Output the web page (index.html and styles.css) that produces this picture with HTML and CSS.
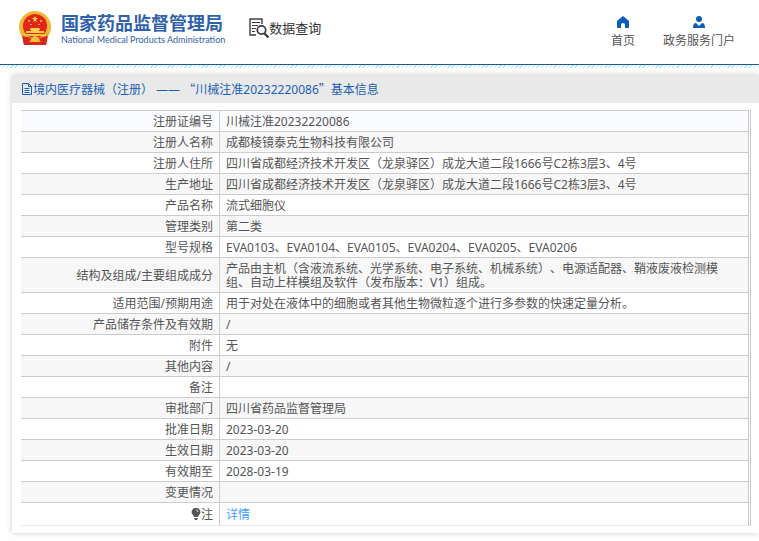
FILE: index.html
```html
<!DOCTYPE html>
<html lang="zh-CN">
<head>
    <meta charset="UTF-8">
    <meta name="viewport" content="width=device-width, initial-scale=1.0">
    <title>国家药品监督管理局 数据查询</title>
    <link rel="stylesheet" href="styles.css">
</head>
<body>
    <header class="header">
        <a href="#" class="logo">
            <svg class="emblem" viewBox="0 0 32 34" aria-hidden="true">
                <path d="M4 25h24l-1 9h-6l-5-2-5 2H5z" fill="#d8261c"/>
                <circle cx="16" cy="16" r="16" fill="#f2b632"/>
                <path d="M3 23q13 8 26 0l-2 6-6 2-5-2-5 2-6-2z" fill="#f0a92c"/>
                <circle cx="16" cy="15" r="12" fill="#e1251b"/>
                <path d="M16 5l1 2h2l-2 2 1 2-2-1-2 1 1-2-2-2h2z" fill="#fbd04a"/>
                <path d="M9 9h2v2H9zM21 9h2v2h-2zM11 13h2v1h-2zM19 13h2v1h-2z" fill="#f5a52f"/>
                <path d="M11 18l1-1h8l1 1v1h-1v1h5v2H7v-2h5v-1h-1z" fill="#fbd04a"/>
                <path d="M5 23h22v2H5z" fill="#f6c23c"/>
                <path d="M3 25l9 2-3 7H5zM29 25l-9 2 3 7h4z" fill="#d8261c"/>
                <circle cx="16" cy="28" r="3" fill="#f8c33b"/>
                <path d="M12 31h8l2 3H10z" fill="#e1251b"/>
            </svg>
            <span class="logo-text">
                <strong>国家药品监督管理局</strong>
                <span>National Medical Products Administration</span>
            </span>
        </a>
        <a href="#" class="search-title">
            <svg viewBox="0 0 20 20" fill="none" stroke="#3a3d44" aria-hidden="true">
                <path d="M13 6V1H1v16h6" stroke-width="1.4"/>
                <path d="M3 4.5h8M3 7.5h6M3 10.500h4M3 13.500h3" stroke-width="1.2"/>
                <circle cx="12.500" cy="12" r="4.200" stroke-width="1.8"/>
                <path d="M15.500 15.500l4 4" stroke-width="2.400"/>
            </svg>
            <span>数据查询</span>
        </a>
        <nav class="navbar">
            <a href="#">
                <svg viewBox="0 0 12 12" fill="#0b5cbd" aria-hidden="true">
                    <path d="M6 0l6 5v6q0 1-1 1H8V8.500Q8 7 6 7T4 8.500V12H1q-1 0-1-1V5z"/>
                </svg>
                <span>首页</span>
            </a>
            <a href="#">
                <svg viewBox="0 0 12 12" fill="#0b5cbd" aria-hidden="true">
                    <circle cx="6" cy="3" r="3"/>
                    <path d="M3 7l3 3 3-3q3 0 3 5H0q0-5 3-5z"/>
                </svg>
                <span>政务服务门户</span>
            </a>
        </nav>
    </header>

    <main class="panel">
        <h1 class="panel-title">
            <svg viewBox="0 0 12 12" fill="none" stroke="#1a5fb4" aria-hidden="true">
                <path d="M1.500.5h6l3 3v8h-9zM7.500.5v3h3M3.500 5.500h5M3.500 7.500h5M3.500 9.500h5"/>
            </svg>
            <span>境内医疗器械（注册） —— <span class="quote">“</span>川械注准20232220086<span class="quote">”</span>基本信息</span>
        </h1>
        <div class="table-box">
            <table class="info">
                <tbody>
                    <tr class="first"><th scope="row">注册证编号</th><td>川械注准20232220086</td></tr>
                    <tr><th scope="row">注册人名称</th><td>成都棱镜泰克生物科技有限公司</td></tr>
                    <tr><th scope="row">注册人住所</th><td>四川省成都经济技术开发区（龙泉驿区）成龙大道二段1666号C2栋3层3、4号</td></tr>
                    <tr><th scope="row">生产地址</th><td>四川省成都经济技术开发区（龙泉驿区）成龙大道二段1666号C2栋3层3、4号</td></tr>
                    <tr><th scope="row">产品名称</th><td>流式细胞仪</td></tr>
                    <tr><th scope="row">管理类别</th><td>第二类</td></tr>
                    <tr><th scope="row">型号规格</th><td>EVA0103、EVA0104、EVA0105、EVA0204、EVA0205、EVA0206</td></tr>
                    <tr><th scope="row">结构及组成/主要组成成分</th><td>产品由主机（含液流系统、光学系统、电子系统、机械系统）、电源适配器、鞘液废液检测模组、自动上样模组及软件（发布版本：V1）组成。</td></tr>
                    <tr><th scope="row">适用范围/预期用途</th><td>用于对处在液体中的细胞或者其他生物微粒逐个进行多参数的快速定量分析。</td></tr>
                    <tr><th scope="row">产品储存条件及有效期</th><td>/</td></tr>
                    <tr><th scope="row">附件</th><td>无</td></tr>
                    <tr><th scope="row">其他内容</th><td>/</td></tr>
                    <tr><th scope="row">备注</th><td></td></tr>
                    <tr><th scope="row">审批部门</th><td>四川省药品监督管理局</td></tr>
                    <tr><th scope="row">批准日期</th><td>2023-03-20</td></tr>
                    <tr><th scope="row">生效日期</th><td>2023-03-20</td></tr>
                    <tr><th scope="row">有效期至</th><td>2028-03-19</td></tr>
                    <tr><th scope="row">变更情况</th><td></td></tr>
                    <tr class="note">
                        <th scope="row">
                            <svg viewBox="0 0 10 12" aria-hidden="true">
                                <path d="M5 0a4 4 0 0 1 3 7L7 9H3L2 7a4 4 0 0 1 3-7zM3 10h4l-1 2H4z" fill="#555"/>
                                <path d="M5 2q2 0 2 2" fill="none" stroke="#ddd"/>
                            </svg>注
                        </th>
                        <td><a href="#">详情</a></td>
                    </tr>
                </tbody>
            </table>
        </div>
    </main>
</body>
</html>
```
FILE: styles.css
```css
* {
    margin: 0;
    padding: 0;
    box-sizing: border-box;
}

body {
    font-family: "Noto Sans", "Noto Sans CJK SC", sans-serif;
    font-size: 12px;
    line-height: 14px;
    text-spacing-trim: space-all;
    color: #555;
    background: #fff;
}

a {
    text-decoration: none;
    color: inherit;
}

svg {
    flex: none;
}

.header {
    display: flex;
    align-items: center;
    height: 70px;
    padding: 0 24px 14px 19px;
    background:
        linear-gradient(#1c5a9c, #1c5a9c) 0 64px / 100% 1px no-repeat,
        repeating-linear-gradient(135deg, #b4e4f8 0 1px, #fff 1px 3px) 0 65px / 100% 3px no-repeat;
}

.logo {
    display: flex;
    align-items: center;
    gap: 10px;
    color: #2f62ad;
}

.emblem {
    width: 32px;
    height: 34px;
}

.logo-text {
    display: flex;
    flex-direction: column;
    padding-top: 4px;
}

.logo-text strong {
    font-size: 18px;
    line-height: 20px;
}

.logo-text span {
    font-family: Lato, sans-serif;
    font-size: 9px;
    line-height: 14px;
    white-space: nowrap;
}

.search-title {
    display: flex;
    align-items: center;
    margin-left: 24px;
    font-size: 13px;
    line-height: 20px;
    color: #333;
}

.search-title svg {
    width: 20px;
    height: 20px;
}

.navbar {
    display: flex;
    gap: 28px;
    margin-left: auto;
    padding-top: 8px;
}

.navbar a {
    display: flex;
    flex-direction: column;
    align-items: center;
    gap: 5px;
    line-height: 16px;
}

.navbar svg {
    width: 12px;
    height: 12px;
}

.panel {
    margin: 5px 0 8px 12px;
    padding-bottom: 7px;
    background: #fff;
    box-shadow: 0 0 6px rgba(0, 0, 0, 0.2);
}

.panel-title {
    display: flex;
    align-items: center;
    height: 28px;
    padding-left: 9px;
    background: #e9e9e9;
    font-size: 12px;
    font-weight: normal;
    color: #1a5fb4;
}

.panel-title svg {
    width: 12px;
    height: 12px;
}

.quote {
    font-family: "Noto Sans CJK SC", sans-serif;
}

.table-box {
    margin: 7px 8px 0 9px;
    padding-right: 1px;
    border-right: 1px solid #c8c8c8;
}

.info {
    width: 100%;
    border-collapse: separate;
    border-spacing: 0;
    border-right: 1px solid #c8c8c8;
    border-bottom: 1px solid #e9e9e9;
}

.info th,
.info td {
    padding: 4px 6px 2px;
    height: 21px;
    border-top: 1px solid #ccc;
    font-weight: normal;
    vertical-align: middle;
}

.info th {
    width: 199px;
    text-align: right;
    border-right: 1px solid #ccc;
}

.info td {
    padding-right: 20px;
    text-align: left;
}

.info tr:nth-child(even) {
    background: #f7f7f7;
}

.info .first {
    background: #fafbfe;
}

.info .note th,
.info .note td {
    height: 23px;
}

.note svg {
    width: 10px;
    height: 12px;
    vertical-align: -1px;
}

.note a {
    color: #409eff;
}
```
